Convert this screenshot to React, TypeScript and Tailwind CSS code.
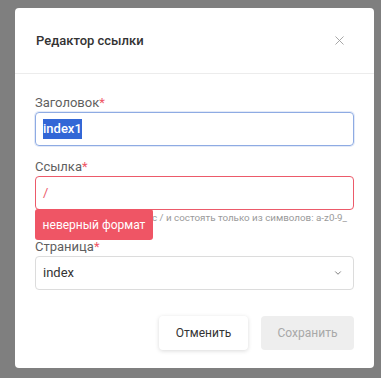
import { X, ChevronDown } from 'lucide-react';

function Label({ text }: { text: string }) {
  return (
    <div className="h-4 text-[13px] leading-4 text-[#5f5f5f]">
      {text}
      <span className="text-[#ef5565]">*</span>
    </div>
  );
}

export default function App() {
  return (
    <div
      className="min-h-[378px] bg-[#7f7f7f] pl-[15px] pt-[8px]"
      style={{ fontFamily: 'Roboto, "Noto Sans", sans-serif' }}
    >
      <div className="flex h-[360px] w-[359px] flex-col rounded-[4px] bg-white">
        {/* Header */}
        <div className="flex h-[66px] items-center justify-between border-b border-[#ececec] pl-[21px] pr-[27px]">
          <span className="text-[13px] font-medium text-[#333333]">Редактор ссылки</span>
          <X size={15} strokeWidth={1.4} className="text-[#9a9a9a]" />
        </div>

        {/* Body */}
        <div className="flex flex-col px-5 pt-[21px]">
          <Label text="Заголовок" />
          <div className="mt-[1px] flex h-[34px] items-center rounded-[4px] border border-[#8eabe3] px-[7px] shadow-[0_0_0_1px_rgba(142,171,227,0.25)]">
            <span className="bg-[#3367d6] text-[13px] font-medium leading-[20px] text-white">index1</span>
          </div>

          <div className="mt-[13px]">
            <Label text="Ссылка" />
          </div>
          <div className="relative mt-[1px]">
            <div className="flex h-[34px] items-center rounded-[4px] border border-[#ec5a6a] px-[7px] text-[13px] text-[#ec5a6a]">
              /
            </div>
            {/* the start of the hint is hidden under the error tooltip */}
            <div className="mt-[1px] h-[14px] whitespace-nowrap pl-[117px] text-[9.8px] leading-[14px] text-[#9a9a9a]">
              с / и состоять только из символов: a-z0-9_
            </div>
            <div className="absolute left-0 top-[33px] flex h-[31px] w-[118px] items-center justify-center rounded-[3px] bg-[#ef5565] text-[12px] text-white">
              неверный формат
            </div>
          </div>

          <div className="mt-[14px]">
            <Label text="Страница" />
          </div>
          <div className="mt-[1px] flex h-[34px] items-center justify-between rounded-[4px] border border-[#dcdcdc] pl-[7px] pr-[10px]">
            <span className="text-[13px] text-[#333333]">index</span>
            <ChevronDown size={10} strokeWidth={2} className="text-[#666666]" />
          </div>

          {/* Footer */}
          <div className="mt-[26px] flex justify-end gap-[13px]">
            <button className="h-[34px] w-[89px] rounded-[4px] bg-white text-[12px] text-[#333333] shadow-[0_1px_4px_rgba(0,0,0,0.15)]">
              Отменить
            </button>
            <button className="h-[34px] w-[93px] rounded-[4px] bg-[#eeeeee] text-[12px] text-[#a8a8a8]" disabled>
              Сохранить
            </button>
          </div>
        </div>
      </div>
    </div>
  );
}
